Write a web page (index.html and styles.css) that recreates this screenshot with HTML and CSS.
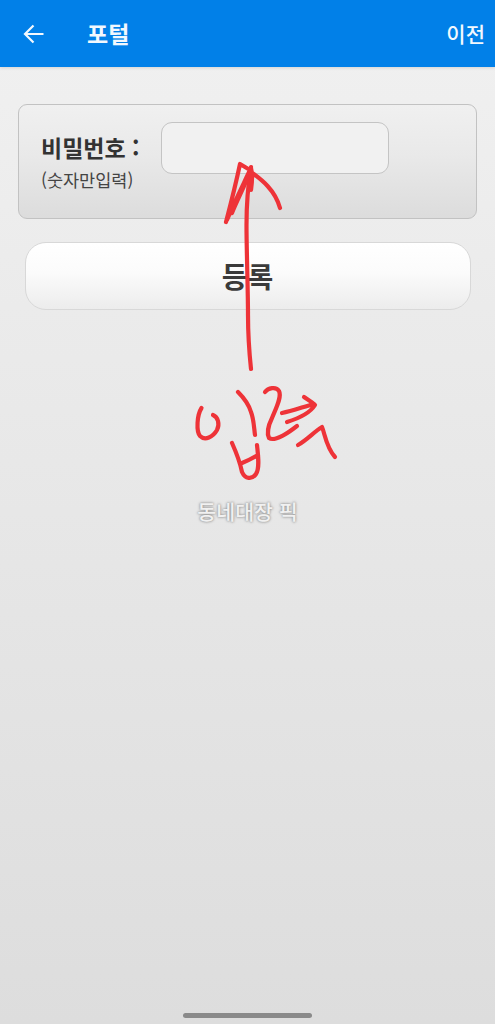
FILE: index.html
```html
<!DOCTYPE html>
<html lang="ko">
<head>
<meta charset="utf-8">
<title>포털</title>
<link rel="stylesheet" href="styles.css">
</head>
<body>
<div class="screen">
  <header class="appbar">
    <svg class="back" viewBox="0 0 22 20" width="22" height="20" aria-hidden="true"><path d="M20.500 10H2M10.500 1.500 2 10l8.500 8.500"/></svg>
    <h1 class="title">포털</h1>
    <span class="prev">이전</span>
  </header>
  <main class="content">
    <section class="panel">
      <div class="labels">
        <div class="label">비밀번호 :</div>
        <div class="hint">(숫자만입력)</div>
      </div>
      <input class="field" type="text" aria-label="비밀번호">
    </section>
    <button class="submit" type="button">등록</button>
    <p class="credit">동네대장 픽</p>
  </main>
  <svg class="scribble" viewBox="0 0 495 1024" width="495" height="1024" aria-hidden="true">
    <path d="M251 369C249 350 248 335 248 315C248 290 246.500 250 246.500 225C246.500 205 248 185 251 167"/>
    <path d="M226 222C231 203 236 183 240 164L250 170C243 185 234 203 227 220M232 213C238 198 246 184 251 168C253 175 252 183 251 190M251 172C262 180 275 190 280 208"/>
    <path d="M201.500 408C197 415 196 431 200 436C205 441 213 437 217 430C220 424 218 417 213 415"/>
    <path d="M238 392C244 398 249 405 251 412C254 420 254 428 255 435"/>
    <path d="M232 443C236 452 240 462 242 472C245 479 252 480 256 474C260 468 258 455 257 445M242 463C247 461 253 458 258 455"/>
    <path d="M265 392C268 388 276 386 279 391C282 397 276 408 272 418C268 426 267 434 269 438C275 442 288 433 297 426"/>
    <path d="M282 413C292 411 303 407 314 404M304 397C308 400 312 402 315 405C310 413 300 418 287 422"/>
    <path d="M298 445C307 440 315 431 322 427C325 434 326 447 335 457"/>
  </svg>
  <div class="home-bar"></div>
</div>
</body>
</html>
```
FILE: styles.css
```css
* { box-sizing: border-box; }
html, body { margin: 0; padding: 0; }
body {
  font-family: "Noto Sans CJK KR", "Noto Sans", sans-serif;
  color: #333;
}
.screen {
  position: relative;
  width: 495px;
  height: 1024px;
  overflow: hidden;
  background: linear-gradient(180deg, #f1f1f1 0%, #dddddd 100%);
}
.appbar {
  display: flex;
  align-items: center;
  height: 67px;
  padding: 0 10px 0 23px;
  background: #0180e8;
  color: #f2f8fe;
  box-shadow: 0 1px 3px rgba(0, 0, 0, .12);
}
.back { fill: none; stroke: #f2f8fe; stroke-width: 2.200; }
.title {
  margin: 0 0 0 42px;
  font-size: 23px;
  font-weight: 700;
  line-height: 1;
}
.prev {
  margin-left: auto;
  font-size: 21px;
  font-weight: 500;
  line-height: 1;
}
.content {
  display: flex;
  flex-direction: column;
  padding: 37px 18px 0;
}
.panel {
  display: flex;
  align-items: flex-start;
  height: 115px;
  padding: 17px 22px 0;
  border: 1px solid #c2c2c2;
  border-radius: 9px;
  background: linear-gradient(180deg, #f0f0f0 0%, #e9e9e9 45%, #dcdcdc 100%);
}
.labels { width: 120px; padding-top: 11px; }
.label {
  font-size: 23px;
  font-weight: 700;
  line-height: 29px;
  color: #333;
  white-space: nowrap;
}
.hint {
  margin-top: 8px;
  font-size: 17.500px;
  line-height: 20px;
  color: #444;
  white-space: nowrap;
}
.field {
  width: 228px;
  height: 52px;
  padding: 0 10px;
  border: 1px solid #c4c4c4;
  border-radius: 11px;
  background: #f1f1f1;
  outline: none;
}
.submit {
  align-self: center;
  width: 446px;
  height: 68px;
  margin-top: 23px;
  border: 1px solid #d8d8d8;
  border-radius: 21px;
  background: linear-gradient(180deg, #ffffff 0%, #fbfbfb 45%, #ececec 100%);
  font-family: inherit;
  font-size: 28px;
  font-weight: 700;
  color: #3a3a3a;
  padding: 0;
}
.credit {
  margin: 187px 0 0;
  text-align: center;
  font-size: 20.600px;
  font-weight: 500;
  line-height: 28px;
  color: #f1f1f1;
  text-shadow: 0 0 3px #8f8f8f, 0 0 2px #a8a8a8;
}
.scribble {
  position: absolute;
  left: 0;
  top: 0;
  fill: none;
  stroke: #ee3338;
  stroke-width: 4.200;
  stroke-linecap: round;
  stroke-linejoin: round;
  pointer-events: none;
}
.home-bar {
  position: absolute;
  left: 183px;
  bottom: 6px;
  width: 129px;
  height: 5px;
  border-radius: 3px;
  background: #8a8a8a;
}
```
